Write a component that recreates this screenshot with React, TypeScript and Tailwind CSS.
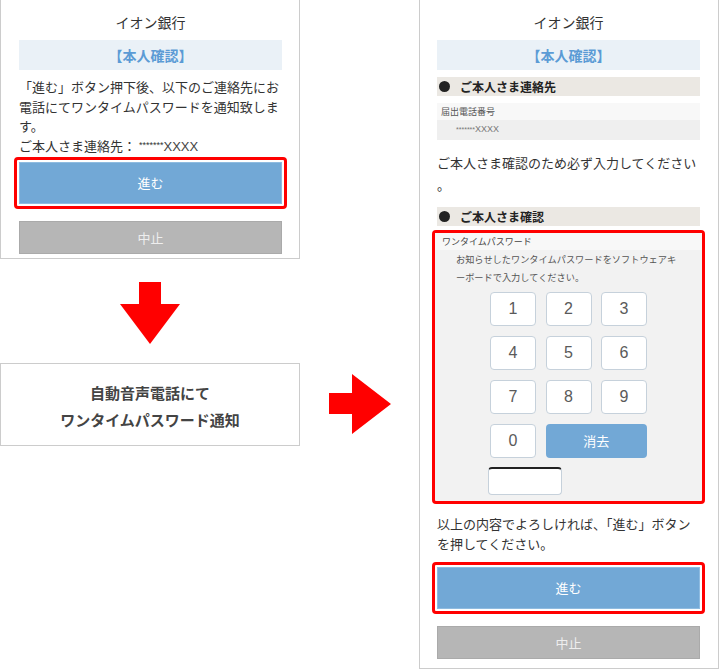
import React from 'react';

const font = "font-['Noto_Sans_CJK_JP',sans-serif]";

function Title() {
  return (
    <>
      <div className="pt-[11px] h-[33px] text-center text-[14px] leading-[22px] text-[#333]">イオン銀行</div>
      <div className="mt-[7px] h-[30px] bg-[#eaf1f7] flex items-center justify-center text-[14px] font-bold text-[#5b9bd5]">
        【本人確認】
      </div>
    </>
  );
}

function ButtonPair({ gap }: { gap: string }) {
  return (
    <>
      <div className="-mx-[5px] border-[3px] border-[#ff0000] rounded-[4px] p-[2px] bg-white">
        <div className="h-[42px] bg-[#72a8d6] border border-[#8fbbe0] flex items-center justify-center text-[13px] text-white">
          進む
        </div>
      </div>
      <div className={`${gap} h-[33px] bg-[#b6b6b6] border border-[#aaaaaa] flex items-center justify-center text-[13px] text-[#eeeeee]`}>
        中止
      </div>
    </>
  );
}

function SectionHead({ label }: { label: string }) {
  return (
    <div className="h-[19px] bg-[#ebe8e3] flex items-center pl-[2px] gap-[10px]">
      <span className="w-[11px] h-[11px] rounded-full bg-[#222]" />
      <span className="text-[12px] font-bold text-[#222] leading-none">{label}</span>
    </div>
  );
}

function Key({ label }: { label: string }) {
  return (
    <div className="h-[34px] bg-white border border-[#c6d1db] rounded-[4px] flex items-center justify-center text-[16px] text-[#5a5a5a] font-['Liberation_Sans',sans-serif]">
      {label}
    </div>
  );
}

function DownArrow() {
  return (
    <svg width="60" height="62" viewBox="0 0 60 62">
      <polygon points="19,0 41,0 41,22 60,22 30,62 0,22 19,22" fill="#ff0000" />
    </svg>
  );
}

function RightArrow() {
  return (
    <svg width="62" height="60" viewBox="0 0 62 60">
      <polygon points="0,19 23,19 23,0 62,30 23,60 23,40 0,40" fill="#ff0000" />
    </svg>
  );
}

export default function App() {
  return (
    <div className={`w-[720px] h-[669px] bg-white flex ${font} text-[#333]`}>
      {/* left column */}
      <div className="w-[300px] flex flex-col">
        <div className="border-x border-b border-[#cccccc] pl-[18px] pr-[17px] pb-[4px]">
          <Title />
          <p className="mt-[7px] text-[13px] leading-[19.5px] text-[#333]">
            「進む」ボタン押下後、以下のご連絡先にお電話にてワンタイムパスワードを通知致します。
            <br />
            ご本人さま連絡先：{' '}
            <span className="text-[9px] align-top font-['Liberation_Sans',sans-serif]">*******</span>
            <span className="font-['Liberation_Sans',sans-serif] text-[13px] text-[#444]">XXXX</span>
          </p>
          <div className="mt-[1px]">
            <ButtonPair gap="mt-[12px]" />
          </div>
        </div>

        <div className="mt-[23px] flex justify-center">
          <DownArrow />
        </div>

        <div className="mt-[19px] h-[83px] border border-[#cccccc] flex flex-col items-center justify-center pt-[2px] text-[15px] font-bold leading-[27px] text-[#444]">
          <div>自動音声電話にて</div>
          <div>ワンタイムパスワード通知</div>
        </div>
      </div>

      {/* arrow between */}
      <div className="w-[119px] pt-[374px] pl-[29px]">
        <RightArrow />
      </div>

      {/* right panel */}
      <div className="w-[300px] h-[669px] border-x border-b border-[#cccccc] pl-[17px] pr-[18px] pb-[8px]">
        <Title />
        <div className="mt-[7px]">
          <SectionHead label="ご本人さま連絡先" />
        </div>
        <div className="mt-[7px] h-[17px] bg-[#f8f8f8] flex items-center pl-[4px] text-[9px] text-[#555]">届出電話番号</div>
        <div className="h-[20px] bg-[#efefef] flex items-center pl-[19px] text-[9px] text-[#777] font-['Liberation_Sans',sans-serif]">
          <span className="text-[7px] self-start pt-[5px]">*******</span>XXXX
        </div>

        <p className="mt-[12px] text-[13px] leading-[22px] text-[#333]">
          ご本人さま確認のため必ず入力してください
          <br />。
        </p>

        <div className="mt-[11px]">
          <SectionHead label="ご本人さま確認" />
        </div>

        <div className="mt-[4px] -mx-[5px] border-[3px] border-[#ff0000] rounded-[4px] bg-[#f2f2f2]">
          <div className="h-[17px] bg-[#f8f8f8] flex items-center pl-[7px] text-[9px] text-[#444]">ワンタイムパスワード</div>
          <div className="pl-[21px] text-[9.2px] leading-[18px] text-[#555]">
            <div>お知らせしたワンタイムパスワードをソフトウェアキ</div>
            <div>ーボードで入力してください。</div>
          </div>
          <div className="mt-[6px] flex justify-center">
            <div className="w-[157px]">
              <div className="grid grid-cols-3 gap-x-[9.5px] gap-y-[10px]">
                {['1', '2', '3', '4', '5', '6', '7', '8', '9'].map((k) => (
                  <Key key={k} label={k} />
                ))}
                <Key label="0" />
                <div className="col-span-2 h-[34px] bg-[#72a8d6] rounded-[4px] flex items-center justify-center text-[13px] text-white">
                  消去
                </div>
              </div>
              <div className="mt-[9px] -ml-[2px] w-[74px] h-[28px] bg-white border border-[#c6d1db] border-t-[2px] border-t-[#222] rounded-[4px]" />
            </div>
          </div>
          <div className="h-[6px]" />
        </div>

        <p className="mt-[10px] text-[13px] leading-[19.5px] text-[#333]">
          以上の内容でよろしければ、「進む」ボタンを押してください。
        </p>
        <div className="mt-[9px]">
          <ButtonPair gap="mt-[12px]" />
        </div>
      </div>
    </div>
  );
}
